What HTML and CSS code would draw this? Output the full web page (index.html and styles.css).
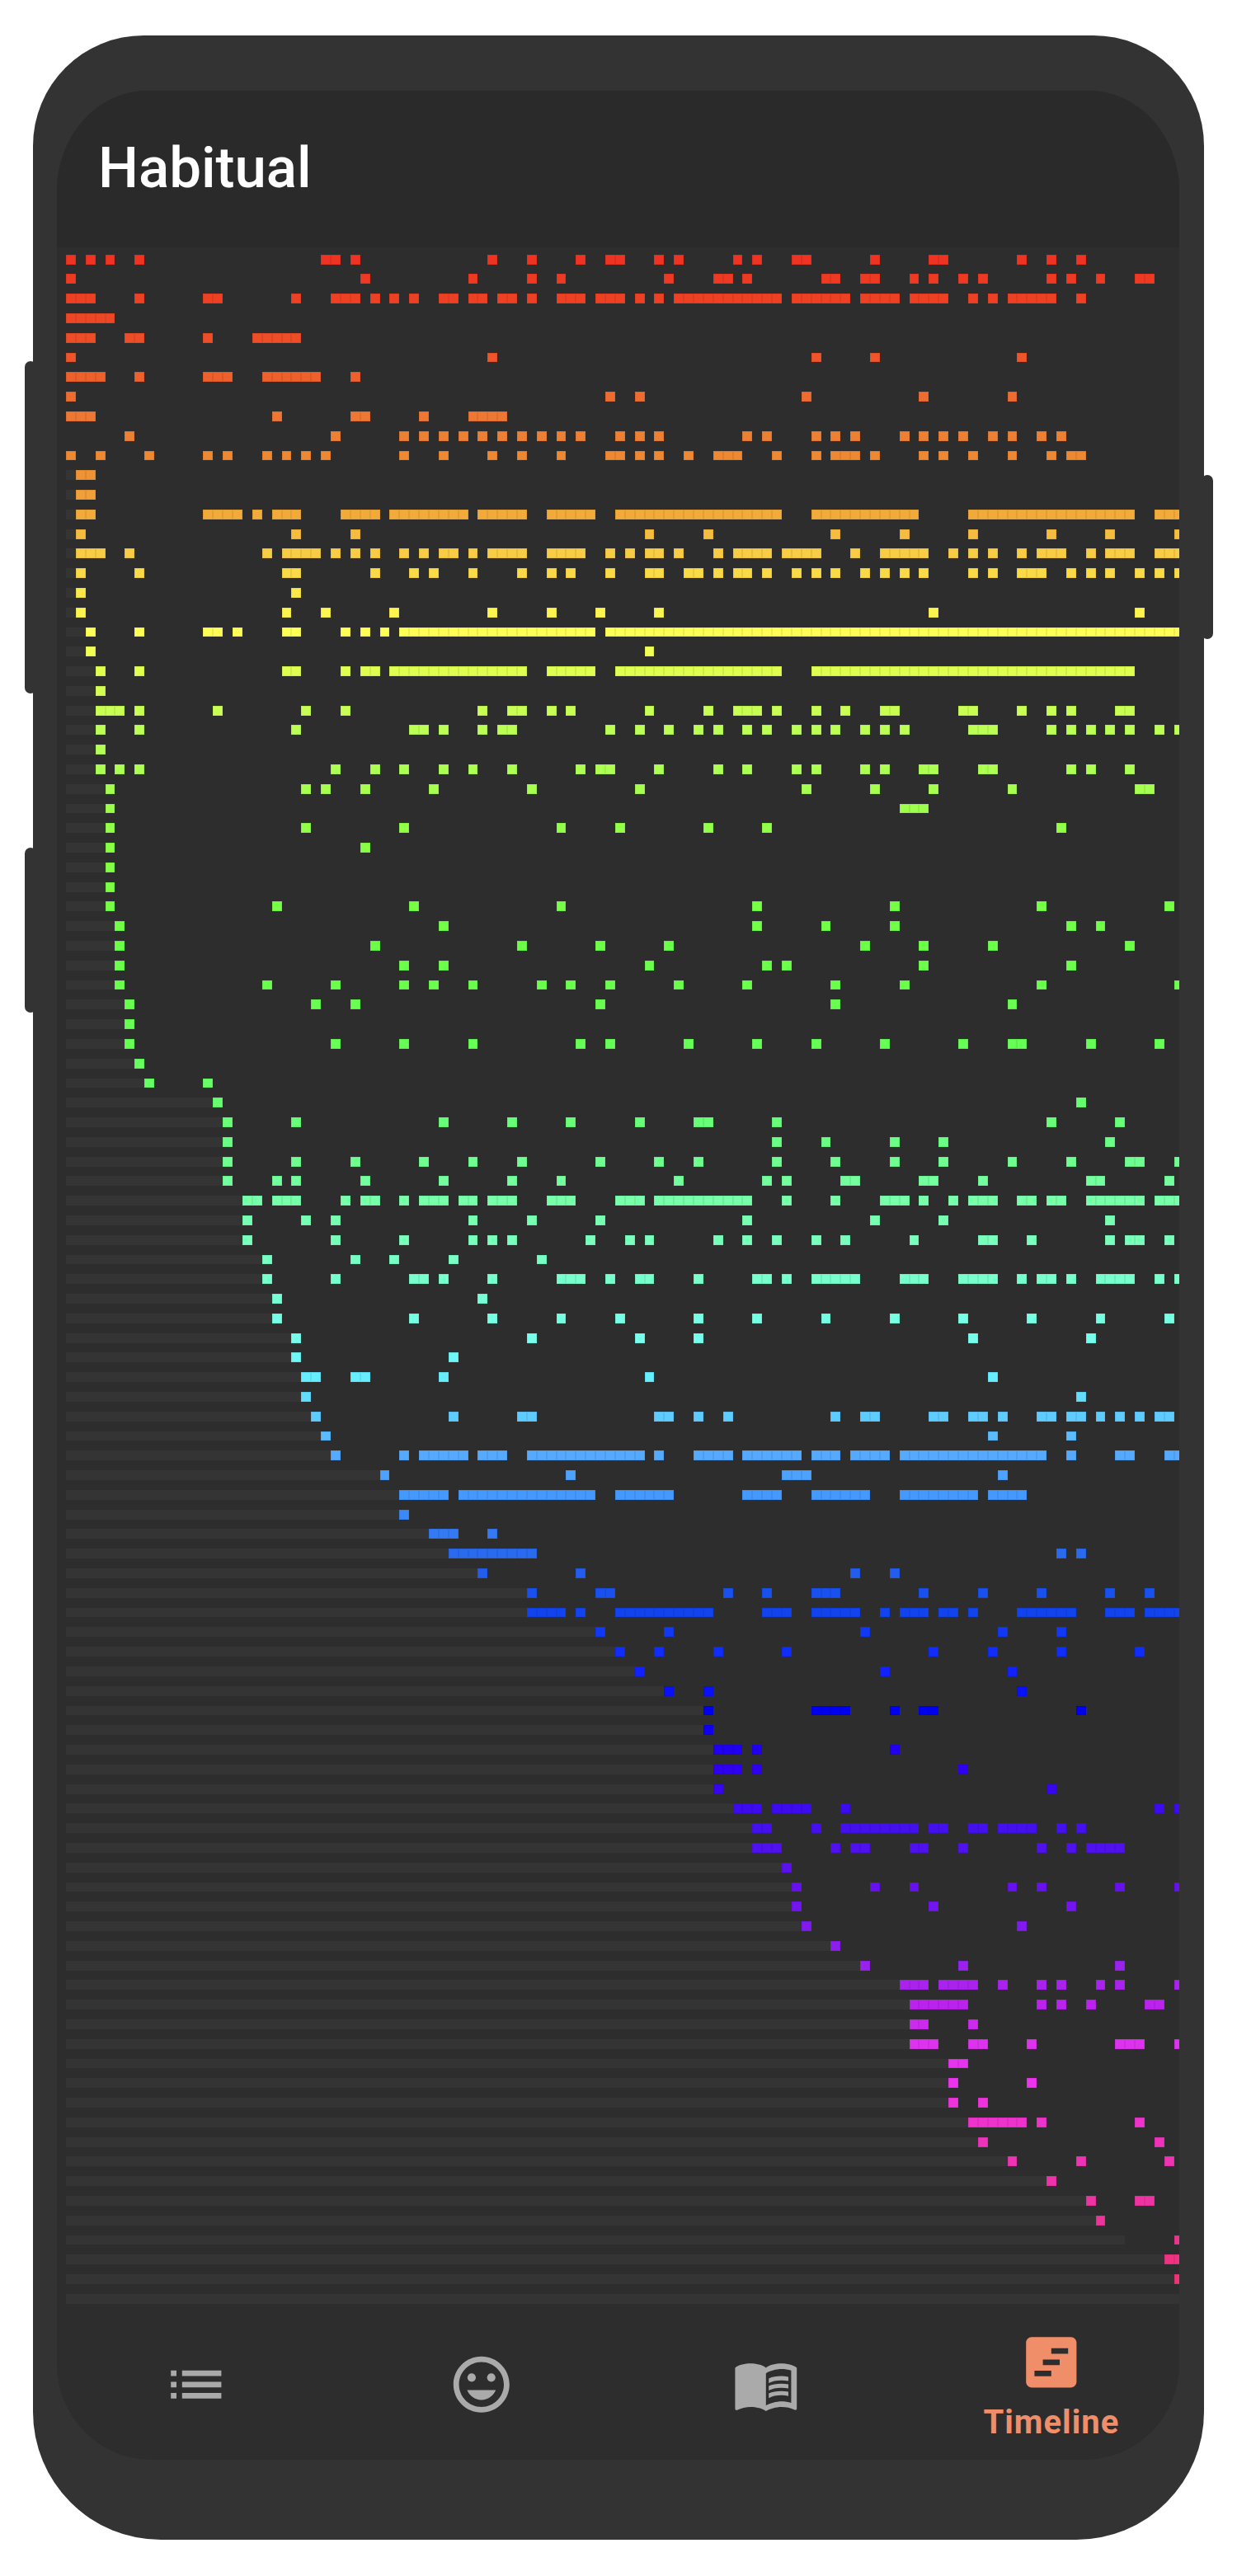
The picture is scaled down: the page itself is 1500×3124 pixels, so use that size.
FILE: index.html
```html
<!DOCTYPE html>
<html lang="en">
<head>
<meta charset="utf-8">
<title>Habitual</title>
<link rel="stylesheet" href="styles.css">
</head>
<body>
<div class="phone">
  <span class="side-btn side-btn-a"></span>
  <span class="side-btn side-btn-b"></span>
  <span class="side-btn side-btn-c"></span>
  <main class="screen">
    <header class="app-bar"><h1 class="app-title">Habitual</h1></header>
    <section class="chart" id="chart"></section>
    <nav class="tabs">
      <a class="tab">
        <svg class="tab-icon" viewBox="0 0 24 24"><path d="M3 13h2v-2H3v2zm0 4h2v-2H3v2zm0-8h2V7H3v2zm4 4h14v-2H7v2zm0 4h14v-2H7v2zM7 7v2h14V7H7z"/></svg>
      </a>
      <a class="tab">
        <svg class="tab-icon" viewBox="0 0 24 24"><circle cx="15.5" cy="9.5" r="1.5"/><circle cx="8.5" cy="9.5" r="1.5"/><path d="M11.99 2C6.47 2 2 6.48 2 12s4.47 10 9.99 10C17.52 22 22 17.52 22 12S17.52 2 11.99 2zM12 20c-4.42 0-8-3.58-8-8s3.58-8 8-8 8 3.58 8 8-3.58 8-8 8zm0-2.5c2.33 0 4.31-1.46 5.11-3.5H6.89c.8 2.04 2.78 3.5 5.11 3.5z"/></svg>
      </a>
      <a class="tab">
        <svg class="tab-icon" viewBox="0 0 24 24"><path d="M21 5c-1.11-.35-2.33-.5-3.5-.5-1.95 0-4.05.4-5.5 1.5-1.45-1.1-3.55-1.5-5.5-1.5S2.45 4.9 1 6v14.65c0 .25.25.5.5.5.1 0 .15-.05.25-.05C3.1 20.45 5.05 20 6.5 20c1.95 0 4.05.4 5.5 1.5 1.35-.85 3.8-1.5 5.5-1.5 1.65 0 3.35.3 4.75 1.05.1.05.15.05.25.05.25 0 .5-.25.5-.5V6c-.6-.45-1.25-.75-2-1zm0 13.5c-1.1-.35-2.3-.5-3.5-.5-1.7 0-4.15.65-5.5 1.5V8c1.35-.85 3.8-1.5 5.5-1.5 1.2 0 2.4.15 3.5.5v11.5z"/><path d="M17.5 10.5c.88 0 1.73.09 2.5.26V9.24c-.79-.15-1.64-.24-2.5-.24-1.7 0-3.24.29-4.5.83v1.66c1.13-.64 2.7-.99 4.5-.99zM13 12.49v1.66c1.13-.64 2.7-.99 4.5-.99.88 0 1.73.09 2.5.26V11.9c-.79-.15-1.64-.24-2.5-.24-1.7 0-3.24.3-4.5.83zM17.5 14.33c-1.7 0-3.24.29-4.5.83v1.66c1.13-.64 2.7-.99 4.5-.99.88 0 1.73.09 2.5.26v-1.52c-.79-.16-1.64-.24-2.5-.24z"/></svg>
      </a>
      <a class="tab tab-active">
        <svg class="tab-icon" viewBox="0 0 24 24"><path fill-rule="evenodd" d="M5 3h14c1.1 0 2 .9 2 2v14c0 1.1-.9 2-2 2H5c-1.1 0-2-.9-2-2V5c0-1.1.9-2 2-2zm7 4v2h6V7h-6zm-3 4v2h6v-2H9zm-3 4v2h6v-2H6z"/></svg>
        <span class="tab-label">Timeline</span>
      </a>
    </nav>
  </main>
</div>
<script src="timeline.js"></script>
</body>
</html>
```

FILE: styles.css
```css
* { box-sizing: border-box; }

html, body { margin: 0; background: #fff; }

body {
  padding: 43px 0 44px 39.5px;
  font-family: Roboto, "Noto Sans", sans-serif;
}

.phone {
  position: relative;
  width: 1420px;
  height: 3037px;
  padding: 67px 29.5px 97px;
  background: #333;
  border-radius: 134px 134px 155px 155px;
}

.side-btn {
  position: absolute;
  width: 14px;
  background: #333;
  border-radius: 8px;
}
.side-btn-a { left: -10px; top: 395px; height: 403px; }
.side-btn-b { left: -10px; top: 985px; height: 200px; }
.side-btn-c { right: -11px; top: 533px; height: 199px; }

.screen {
  position: relative;
  display: flex;
  flex-direction: column;
  height: 2873px;
  background: #2d2d2d;
  border-radius: 110px 110px 115px 115px / 122px 122px 116px 116px;
  overflow: hidden;
}

.app-bar {
  flex: none;
  height: 190px;
  padding-left: 50px;
  background: #2a2a2a;
}

.app-title {
  margin: 0;
  padding-top: 54px;
  font-size: 69px;
  line-height: 80px;
  font-weight: 500;
  color: #fff;
}

.chart {
  flex: none;
  height: 2507.7px;
  padding: 8.7px 0 0 11px;
}

.row {
  display: grid;
  grid-template-columns: repeat(115, 11.9px);
  height: 11.9px;
  margin-bottom: 11.9px;
}

.track {
  grid-row: 1;
  background: #343434;
}

.cell {
  grid-row: 1;
  box-shadow: inset 0 0 0 1px rgba(0, 0, 0, .07);
}

.tabs {
  flex: 1;
  display: grid;
  grid-template-columns: repeat(4, 345.7px);
  margin-left: -4px;
}

.tab {
  display: flex;
  flex-direction: column;
  align-items: center;
  padding-top: 43px;
}

.tab-icon {
  display: block;
  width: 81.6px;
  height: 81.6px;
  fill: #aaa;
}

.tab-active { padding-top: 16px; }
.tab-active .tab-icon { fill: #f08e6a; }

.tab-label {
  margin-top: 11px;
  font-size: 40px;
  line-height: 44px;
  font-weight: 700;
  letter-spacing: 1px;
  color: #f08e6a;
}
```

FILE: timeline.js
```js
var ROWS = [
"0 2 4 7 26-27 29 43 47 52 55-56 60 62 68 70 74-75 82 88-89 97 100 103",
"0 30 41 47 50 61 66-67 69 77-78 81-82 86 88 91 93 100 102 105 109-110",
"0-2 7 14-15 23 27-29 31 33 35 38-39 41-42 44-45 47 50-52 54-56 58 60 62-72 74-79 81-84 86-89 92 94 96-100 103",
"0-4",
"0-2 6-7 14 19-23",
"0 43 76 82 97",
"0-3 7 14-16 20-25 29",
"0 55 58 75 87 96",
"0-2 21 29-30 36 41-44",
"6 27 34 36 38 40 42 44 46 48 50 52 56 58 60 69 71 76 78 80 85 87 89 91 94 96 99 101",
"0 3 8 14 16 20 22 24 26 34 38 43 46 50 55-56 58 60 63 66-68 72 76 78-80 82 87 89 92 96 100 102-103",
"1-2",
"1-2",
"1-2 14-17 19 21-23 28-31 33-40 42-46 49-53 56-72 76-86 92-108 111-113",
"1 23 29 59 65 78 85 92 100 106 113",
"1-3 6 20 22-25 27 29 31 34 36 38-39 41 43-46 49-52 55 57 59-60 62 66 68-71 73-76 80 83-87 90 92 94 97 99-101 104 106-108 111-113",
"1 7 22-23 31 35 37 41 46 49 51 55 59-60 63-64 66 68-69 71 74 76 78 81 83 85 87 92 94 97-99 102 104 106 109 111 113",
"1 23",
"1 22 26 33 43 49 54 60 88 109",
"2 7 14-15 17 22-23 28 30 32 34-53 55-113",
"2 59",
"3 7 22-23 28 30-31 33-46 49-53 56-72 76-108",
"3",
"3-5 7 15 24 28 42 45-46 49 51 59 65 68-70 72 76 79 83-84 91-92 97 100 102 107-108",
"3 7 23 35-36 38 42 44-45 55 58 61 64 66 69 71 74 76 78 81 83 85 92-94 100 102 104 106 108 111 113",
"3",
"3 5 7 27 31 34 38 41 45 52 54-55 60 66 69 74 76 81 83 87-88 93-94 102 104 108",
"4 24 26 30 37 47 58 75 82 88 96 109-110",
"4 85-87",
"4 24 34 50 56 65 71 101",
"4 30",
"4",
"4",
"4 21 35 50 70 84 99 112",
"5 38 70 77 84 102 105",
"5 31 46 54 61 81 87 94 108",
"5 34 38 59 71 73 87 102",
"5 20 27 34 37 41 48 51 55 62 69 78 85 99 113",
"6 25 29 54 78 96",
"6",
"6 27 34 41 52 55 63 70 76 83 91 96-97 104 111",
"7",
"8 14",
"15 103",
"16 23 38 45 51 58 64-65 72 100 107",
"16 72 77 84 89 106",
"16 23 29 36 41 46 54 60 64 72 78 84 89 96 102 108-109 113",
"16 21 23 30 38 45 50 62 71 73 79-80 87-88 93 104-105 112",
"18-19 21-23 28 30-31 34 36-38 40-41 43-45 49-51 56-58 60-69 73 78 83-85 87 90 92-94 97-98 100-101 104-109 111-113",
"18 24 27 41 47 54 69 82 89 106",
"18 27 34 41 43 45 53 57 59 66 69 72 76 79 86 93-94 98 106 108-109 112",
"20 29 33 39 48",
"20 27 35-36 38 43 50-52 55 58-59 64 70-71 73 76-80 85-87 91-94 97 99-100 102 105-108 111 113",
"21 42",
"21 35 43 50 56 64 70 77 84 91 98 105 112",
"23 47 58 64 92 104",
"23 39",
"24-25 29-30 38 59 94",
"24 103",
"25 39 46-47 60-61 64 67 78 81-82 88-89 92-93 95 99-100 102-103 105 107 109 111-112",
"26 94 102",
"27 34 36-40 42-44 47-58 60 64-67 69-74 76-78 80-83 85-99 102 107-108 112-113",
"32 51 73-75 95",
"34-38 40-53 56-61 69-72 76-81 85-92 94-97",
"34",
"37-39 43",
"39-47 101 103",
"42 52 80 84",
"47 54-55 67 71 76-78 87 93 99 106 110",
"47-50 52 56-65 71-73 76-80 83 85-87 89-90 92 97-102 106-108 110-113",
"54 61 81 95 101",
"56 60 66 73 88 94 101 109",
"58 83 96",
"61 65 97",
"65 76-79 84 87-88 103",
"65",
"66-68 70 84",
"66-68 70 91",
"66 100",
"68-70 72-75 79 111 113",
"70-71 76 79-86 88-89 92-93 95-98 101 103",
"70-72 78 80-81 86-87 91 99 102 104-107",
"73",
"74 82 86 96 99 107 113",
"74 88 102",
"75 97",
"78",
"81 91 107",
"85-87 89-92 95 99 101 105 107 113",
"86-91 99 101 104 110-111",
"86-87 92",
"86-88 92-93 98 107-109 113",
"90-91",
"90 98",
"90 93",
"92-97 99 109",
"93 111",
"96 103 112",
"100",
"104 109-110",
"105",
"113",
"112-113",
"113",
""
];

/* rows whose grey lead-in does not simply stop at the first filled day */
var TRACK_OVERRIDE = { 9: 0, 101: 108, 104: 115 };

var STOPS = [
  [0, 0xee, 0x33, 0x22], [5, 0xee, 0x55, 0x28], [8, 0xee, 0x77, 0x33],
  [10, 0xee, 0x88, 0x33], [13, 0xf2, 0xab, 0x3a], [15, 0xf8, 0xcc, 0x44],
  [17, 0xfb, 0xe8, 0x4a], [19, 0xff, 0xff, 0x55], [21, 0xdf, 0xff, 0x50],
  [24, 0xbb, 0xff, 0x55], [27, 0xa6, 0xff, 0x4f], [30, 0x88, 0xff, 0x44],
  [35, 0x6c, 0xff, 0x48], [40, 0x66, 0xff, 0x55], [44, 0x66, 0xff, 0x77],
  [48, 0x77, 0xff, 0xaa], [52, 0x77, 0xff, 0xcc], [55, 0x77, 0xff, 0xee],
  [57, 0x66, 0xee, 0xff], [59, 0x5f, 0xcc, 0xff], [61, 0x55, 0xaa, 0xff],
  [63, 0x44, 0x99, 0xff], [66, 0x2a, 0x6a, 0xee], [69, 0x11, 0x44, 0xee],
  [72, 0x11, 0x22, 0xff], [74, 0x00, 0x00, 0xee], [77, 0x30, 0x00, 0xf0],
  [80, 0x44, 0x11, 0xee], [83, 0x66, 0x11, 0xee], [87, 0x99, 0x22, 0xee],
  [89, 0xbb, 0x22, 0xee], [91, 0xdd, 0x33, 0xee], [93, 0xee, 0x33, 0xee],
  [96, 0xee, 0x33, 0xbb], [100, 0xee, 0x33, 0x99], [103, 0xee, 0x33, 0x77]
];

function colourFor(row) {
  for (var i = 0; i < STOPS.length - 1; i++) {
    var a = STOPS[i], b = STOPS[i + 1];
    if (row <= b[0]) {
      var t = (row - a[0]) / (b[0] - a[0]);
      return "rgb(" + [1, 2, 3].map(function (k) {
        return Math.round(a[k] + (b[k] - a[k]) * t);
      }).join(",") + ")";
    }
  }
  var l = STOPS[STOPS.length - 1];
  return "rgb(" + l[1] + "," + l[2] + "," + l[3] + ")";
}

var chart = document.getElementById("chart");

ROWS.forEach(function (spec, index) {
  var row = document.createElement("div");
  row.className = "row";
  var days = [];
  spec.split(" ").forEach(function (part) {
    if (!part) return;
    var bounds = part.split("-").map(Number);
    var end = bounds.length > 1 ? bounds[1] : bounds[0];
    for (var d = bounds[0]; d <= end; d++) days.push(d);
  });
  var lead = index in TRACK_OVERRIDE ? TRACK_OVERRIDE[index] : (days.length ? days[0] : 0);
  if (lead > 0) {
    var track = document.createElement("span");
    track.className = "track";
    track.style.gridColumn = "1 / span " + lead;
    row.appendChild(track);
  }
  var colour = colourFor(index);
  days.forEach(function (day) {
    var cell = document.createElement("span");
    cell.className = "cell";
    cell.style.gridColumn = String(day + 1);
    cell.style.background = colour;
    row.appendChild(cell);
  });
  chart.appendChild(row);
});
```
